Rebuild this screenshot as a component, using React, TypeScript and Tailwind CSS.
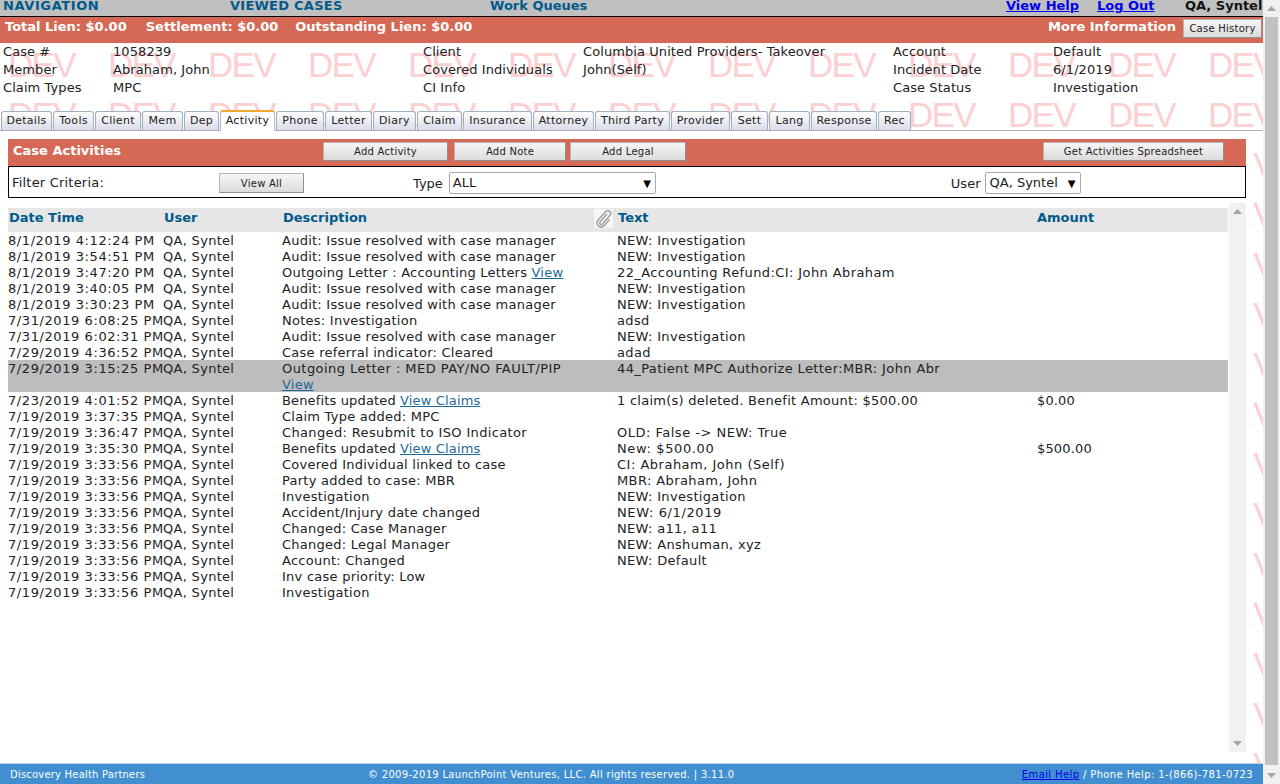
import React from "react";

const F = "font-['DejaVu_Sans','Liberation_Sans',sans-serif]";

const tabs: [string, number][] = [
  ["Details", 51], ["Tools", 41], ["Client", 46], ["Mem", 41], ["Dep", 35], ["Activity", 55], ["Phone", 48],
  ["Letter", 47], ["Diary", 43], ["Claim", 45], ["Insurance", 69], ["Attorney", 61], ["Third Party", 75],
  ["Provider", 59], ["Sett", 37], ["Lang", 41], ["Response", 66], ["Rec", 33],
];

type Row = { d: string; desc: React.ReactNode; t?: string; a?: string; hi?: boolean; k?: string };
const L = ({ children }: { children: React.ReactNode }) => <a className="text-[#1d6a96] underline">{children}</a>;
const rows: Row[] = [
  { d: "8/1/2019 4:12:24 PM", desc: "Audit: Issue resolved with case manager", t: "NEW: Investigation" },
  { d: "8/1/2019 3:54:51 PM", desc: "Audit: Issue resolved with case manager", t: "NEW: Investigation" },
  { d: "8/1/2019 3:47:20 PM", desc: <span className="tracking-[0.22px]">Outgoing Letter : Accounting Letters <L>View</L></span>, t: "22_Accounting Refund:CI: John Abraham", k: "tracking-[0.4px]" },
  { d: "8/1/2019 3:40:05 PM", desc: "Audit: Issue resolved with case manager", t: "NEW: Investigation" },
  { d: "8/1/2019 3:30:23 PM", desc: "Audit: Issue resolved with case manager", t: "NEW: Investigation" },
  { d: "7/31/2019 6:08:25 PM", desc: "Notes: Investigation", t: "adsd" },
  { d: "7/31/2019 6:02:31 PM", desc: "Audit: Issue resolved with case manager", t: "NEW: Investigation" },
  { d: "7/29/2019 4:36:52 PM", desc: "Case referral indicator: Cleared", t: "adad" },
  { d: "7/29/2019 3:15:25 PM", desc: <><span className="tracking-[0.45px]">Outgoing Letter : MED PAY/NO FAULT/PIP</span><br /><L>View</L></>, t: "44_Patient MPC Authorize Letter:MBR: John Abr", hi: true, k: "tracking-[0.38px]" },
  { d: "7/23/2019 4:01:52 PM", desc: <span className="tracking-[0.15px]">Benefits updated <L>View Claims</L></span>, t: "1 claim(s) deleted. Benefit Amount: $500.00", a: "$0.00", k: "tracking-[0.26px]" },
  { d: "7/19/2019 3:37:35 PM", desc: "Claim Type added: MPC" },
  { d: "7/19/2019 3:36:47 PM", desc: <span className="tracking-[0.36px]">Changed: Resubmit to ISO Indicator</span>, t: "OLD: False -> NEW: True", k: "tracking-[0.5px]" },
  { d: "7/19/2019 3:35:30 PM", desc: <span className="tracking-[0.15px]">Benefits updated <L>View Claims</L></span>, t: "New: $500.00", a: "$500.00", k: "tracking-[0.62px]" },
  { d: "7/19/2019 3:33:56 PM", desc: "Covered Individual linked to case", t: "CI: Abraham, John (Self)", k: "tracking-[0.5px]" },
  { d: "7/19/2019 3:33:56 PM", desc: "Party added to case: MBR", t: "MBR: Abraham, John", k: "tracking-[0.4px]" },
  { d: "7/19/2019 3:33:56 PM", desc: "Investigation", t: "NEW: Investigation" },
  { d: "7/19/2019 3:33:56 PM", desc: "Accident/Injury date changed", t: "NEW: 6/1/2019", k: "tracking-[0.62px]" },
  { d: "7/19/2019 3:33:56 PM", desc: "Changed: Case Manager", t: "NEW: a11, a11" },
  { d: "7/19/2019 3:33:56 PM", desc: "Changed: Legal Manager", t: "NEW: Anshuman, xyz" },
  { d: "7/19/2019 3:33:56 PM", desc: "Account: Changed", t: "NEW: Default" },
  { d: "7/19/2019 3:33:56 PM", desc: "Inv case priority: Low" },
  { d: "7/19/2019 3:33:56 PM", desc: "Investigation" },
];

const info = [
  ["Case #", "1058239", "Client", "Columbia United Providers- Takeover", "Account", "Default"],
  ["Member", "Abraham, John", "Covered Individuals", "John(Self)", "Incident Date", "6/1/2019"],
  ["Claim Types", "MPC", "CI Info", "", "Case Status", "Investigation"],
];

const Btn = ({ children, className }: { children: React.ReactNode; className: string }) => (
  <button className={`h-[19px] shrink-0 border border-[#b5b5b5] border-r-[#8f8f8f] border-b-[#8f8f8f] bg-gradient-to-b from-[#f6f6f6] to-[#dcdcdc] text-[10px] font-normal leading-[17px] tracking-[0.25px] text-[#222] ${className}`}>
    {children}
  </button>
);

const Tri = ({ dir }: { dir: "up" | "down" }) => (
  <svg width="9" height="5" viewBox="0 0 9 5" className="fill-[#a3a3a3]">
    <path d={dir === "up" ? "M4.5 0 9 5H0z" : "M0 0h9L4.5 5z"} />
  </svg>
);

export default function App() {
  const marks = Array.from({ length: 15 * 13 });
  return (
    <div className={`relative h-[784px] w-[1280px] overflow-hidden bg-white text-[13px] text-[#222] ${F}`}>
      {/* watermark */}
      <div aria-hidden className="absolute left-0 top-[47px] grid h-[717px] w-[1263px] grid-cols-[repeat(13,100px)] auto-rows-[50px] overflow-hidden pl-[8px] font-['Liberation_Sans',sans-serif] text-[35px] leading-[36px] tracking-[-1.7px] text-[#fcd0d0]">
        {marks.map((_, i) => <span key={i} className="whitespace-nowrap">DEV</span>)}
      </div>

      <div className="relative flex h-full w-[1263px] flex-col">
        {/* top nav */}
        <div className="flex h-[17px] items-start border-b border-black bg-[#c0c0c0] text-[13px] font-bold leading-[12px] text-[#005a8c]">
          <span className="ml-[3px] w-[227px] tracking-[0.6px]">NAVIGATION</span>
          <span className="w-[260px] tracking-[0.25px]">VIEWED CASES</span>
          <span className="w-[516px]">Work Queues</span>
          <a className="w-[91px] text-[#0000ee] underline">View Help</a>
          <a className="w-[88px] text-[#0000ee] underline">Log Out</a>
          <span className="whitespace-nowrap text-[#111]">QA, Syntel</span>
        </div>

        {/* lien bar */}
        <div className="flex h-[26px] items-start bg-[#d66955] pl-[5px] pr-[1px] pt-[2px] text-[13px] font-bold leading-[16px] text-white">
          <span>Total Lien: $0.00</span>
          <span className="ml-[19px]">Settlement: $0.00</span>
          <span className="ml-[17px]">Outstanding Lien: $0.00</span>
          <span className="ml-auto mr-[7px]">More Information</span>
          <Btn className="w-[79px]">Case History</Btn>
        </div>

        {/* case info */}
        <div className="grid h-[67px] auto-rows-[18px] grid-cols-[110px_310px_160px_310px_160px_1fr] content-start pl-[3px] leading-[18px] tracking-[0.08px]">
          {info.flat().map((c, i) => <span key={i} className="whitespace-nowrap">{c}</span>)}
        </div>

        {/* tabs */}
        <div className="flex h-[21px] items-end gap-[1px] border-b border-[#a9b1b8] pl-[1px]">
          {tabs.map(([t, w]) =>
            t === "Activity" ? (
              <div key={t} style={{ width: w }} className="relative z-10 -mb-px flex h-[21px] shrink-0 items-center justify-center rounded-t-[3px] border border-b-0 border-t-2 border-[#b5bcc4] border-t-[#f0a830] bg-white text-[11px] tracking-[0.3px] text-[#222]">{t}</div>
            ) : (
              <div key={t} style={{ width: w }} className="flex h-[19px] shrink-0 items-center justify-center rounded-t-[3px] border border-b-0 border-[#9fb0bf] bg-gradient-to-b from-white to-[#d9dce8] pt-px text-[11px] tracking-[0.3px] text-[#222]">{t}</div>
            )
          )}
        </div>

        {/* panel */}
        <div className="flex min-h-0 w-[1253px] flex-1 flex-col bg-white pl-[8px] pt-[8px]">
          <div className="flex h-[27px] w-[1238px] items-start bg-[#d66955] pt-[3px]">
            <span className="ml-[5px] mt-px w-[310px] font-bold leading-[16px] text-white">Case Activities</span>
            <Btn className="w-[125px]">Add Activity</Btn>
            <Btn className="ml-[6px] w-[112px]">Add Note</Btn>
            <Btn className="ml-[4px] w-[116px]">Add Legal</Btn>
            <Btn className="ml-[357px] w-[181px]">Get Activities Spreadsheet</Btn>
          </div>
          <div className="flex h-[32px] w-[1238px] items-start border border-black bg-white pl-[3px] pt-[5px] text-[13px]">
            <span className="mt-px w-[207px] leading-[20px] tracking-[0.2px]">Filter Criteria:</span>
            <Btn className="mt-px h-[20px] w-[85px]">View All</Btn>
            <span className="ml-[109px] mt-[2px] leading-[20px]">Type</span>
            <div className="ml-[6px] flex h-[22px] w-[207px] items-center justify-between rounded-[2px] border border-[#a9a9a9] pl-[3px] pr-[4px]"><span>ALL</span><span className="text-[10px] text-black">▼</span></div>
            <span className="ml-[295px] mt-[2px] leading-[20px]">User</span>
            <div className="ml-[4px] flex h-[22px] w-[96px] items-center justify-between rounded-[2px] border border-[#a9a9a9] pl-[4px] pr-[4px]"><span>QA, Syntel</span><span className="text-[10px] text-black">▼</span></div>
          </div>

          <div className="flex min-h-0 w-[1238px] flex-1 pb-[11px] pt-[5px]">
            <div className="w-[1221px] pt-[5px]">
              <div className="grid h-[24px] w-[1220px] grid-cols-[155px_119px_311px_24px_419px_1fr] items-start bg-[#e7e6e6] pl-[1px] font-bold leading-[20px] text-[#005a8c]">
                <span>Date Time</span>
                <span>User</span>
                <span>Description</span>
                <span className="mt-[1px] flex h-[19px] w-[19px] items-center justify-center bg-[#f7f7f7]">
                  <svg width="19" height="19" viewBox="0 0 19 19" fill="none" stroke="#a0a0a0" strokeWidth="1.5" strokeLinecap="round" strokeLinejoin="round"><path d="M12.5 5.5 6 13a1.6 1.6 0 0 0 2.4 2.1L16 6.2a2.8 2.8 0 0 0-4.2-3.7L3.7 11.5a4.1 4.1 0 0 0 6.1 5.4l5.4-6.2" /></svg>
                </span>
                <span>Text</span>
                <span>Amount</span>
              </div>
              <div className="mt-[1px]">
                {rows.map((r, i) => (
                  <div key={i} className={`grid w-[1220px] grid-cols-[155px_119px_335px_420px_1fr] leading-[16px] tracking-[0.25px] ${r.hi ? "-mt-px mb-px h-[32px] bg-[#bdbdbd] pt-px" : ""}`}>
                    <span className="whitespace-nowrap tracking-[0.58px]">{r.d}</span>
                    <span className="tracking-[0.3px]">QA, Syntel</span>
                    <span>{r.desc}</span>
                    <span className={`whitespace-nowrap ${r.k ?? "tracking-[0.33px]"}`}>{r.t}</span>
                    <span className="tracking-[0.15px]">{r.a}</span>
                  </div>
                ))}
              </div>
            </div>
            <div className="flex w-[17px] flex-col items-center justify-between bg-[#f1f1f1] py-[6px]">
              <Tri dir="up" /><Tri dir="down" />
            </div>
          </div>
        </div>

        {/* footer */}
        <div className="flex h-[21px] items-center border-t border-[#b9cfe3] bg-[#418fd0] pl-[10px] pr-[10px] text-[10px] text-white">
          <span className="w-[358px] tracking-[0.2px]">Discovery Health Partners</span>
          <span className="tracking-[0.3px]">© 2009-2019 LaunchPoint Ventures, LLC. All rights reserved. | 3.11.0</span>
          <span className="ml-auto tracking-[0.38px]"><a className="text-[#0000ee] underline">Email Help</a> / Phone Help: 1-(866)-781-0723</span>
        </div>
      </div>

      {/* browser scrollbar */}
      <div className="absolute right-0 top-0 flex h-full w-[17px] flex-col items-center justify-between bg-[#f1f1f1] py-[6px]">
        <Tri dir="up" />
        <Tri dir="down" />
      </div>
      <div className="absolute right-[2px] top-[17px] h-[748px] w-[13px] bg-[#c1c1c1]" />
    </div>
  );
}
